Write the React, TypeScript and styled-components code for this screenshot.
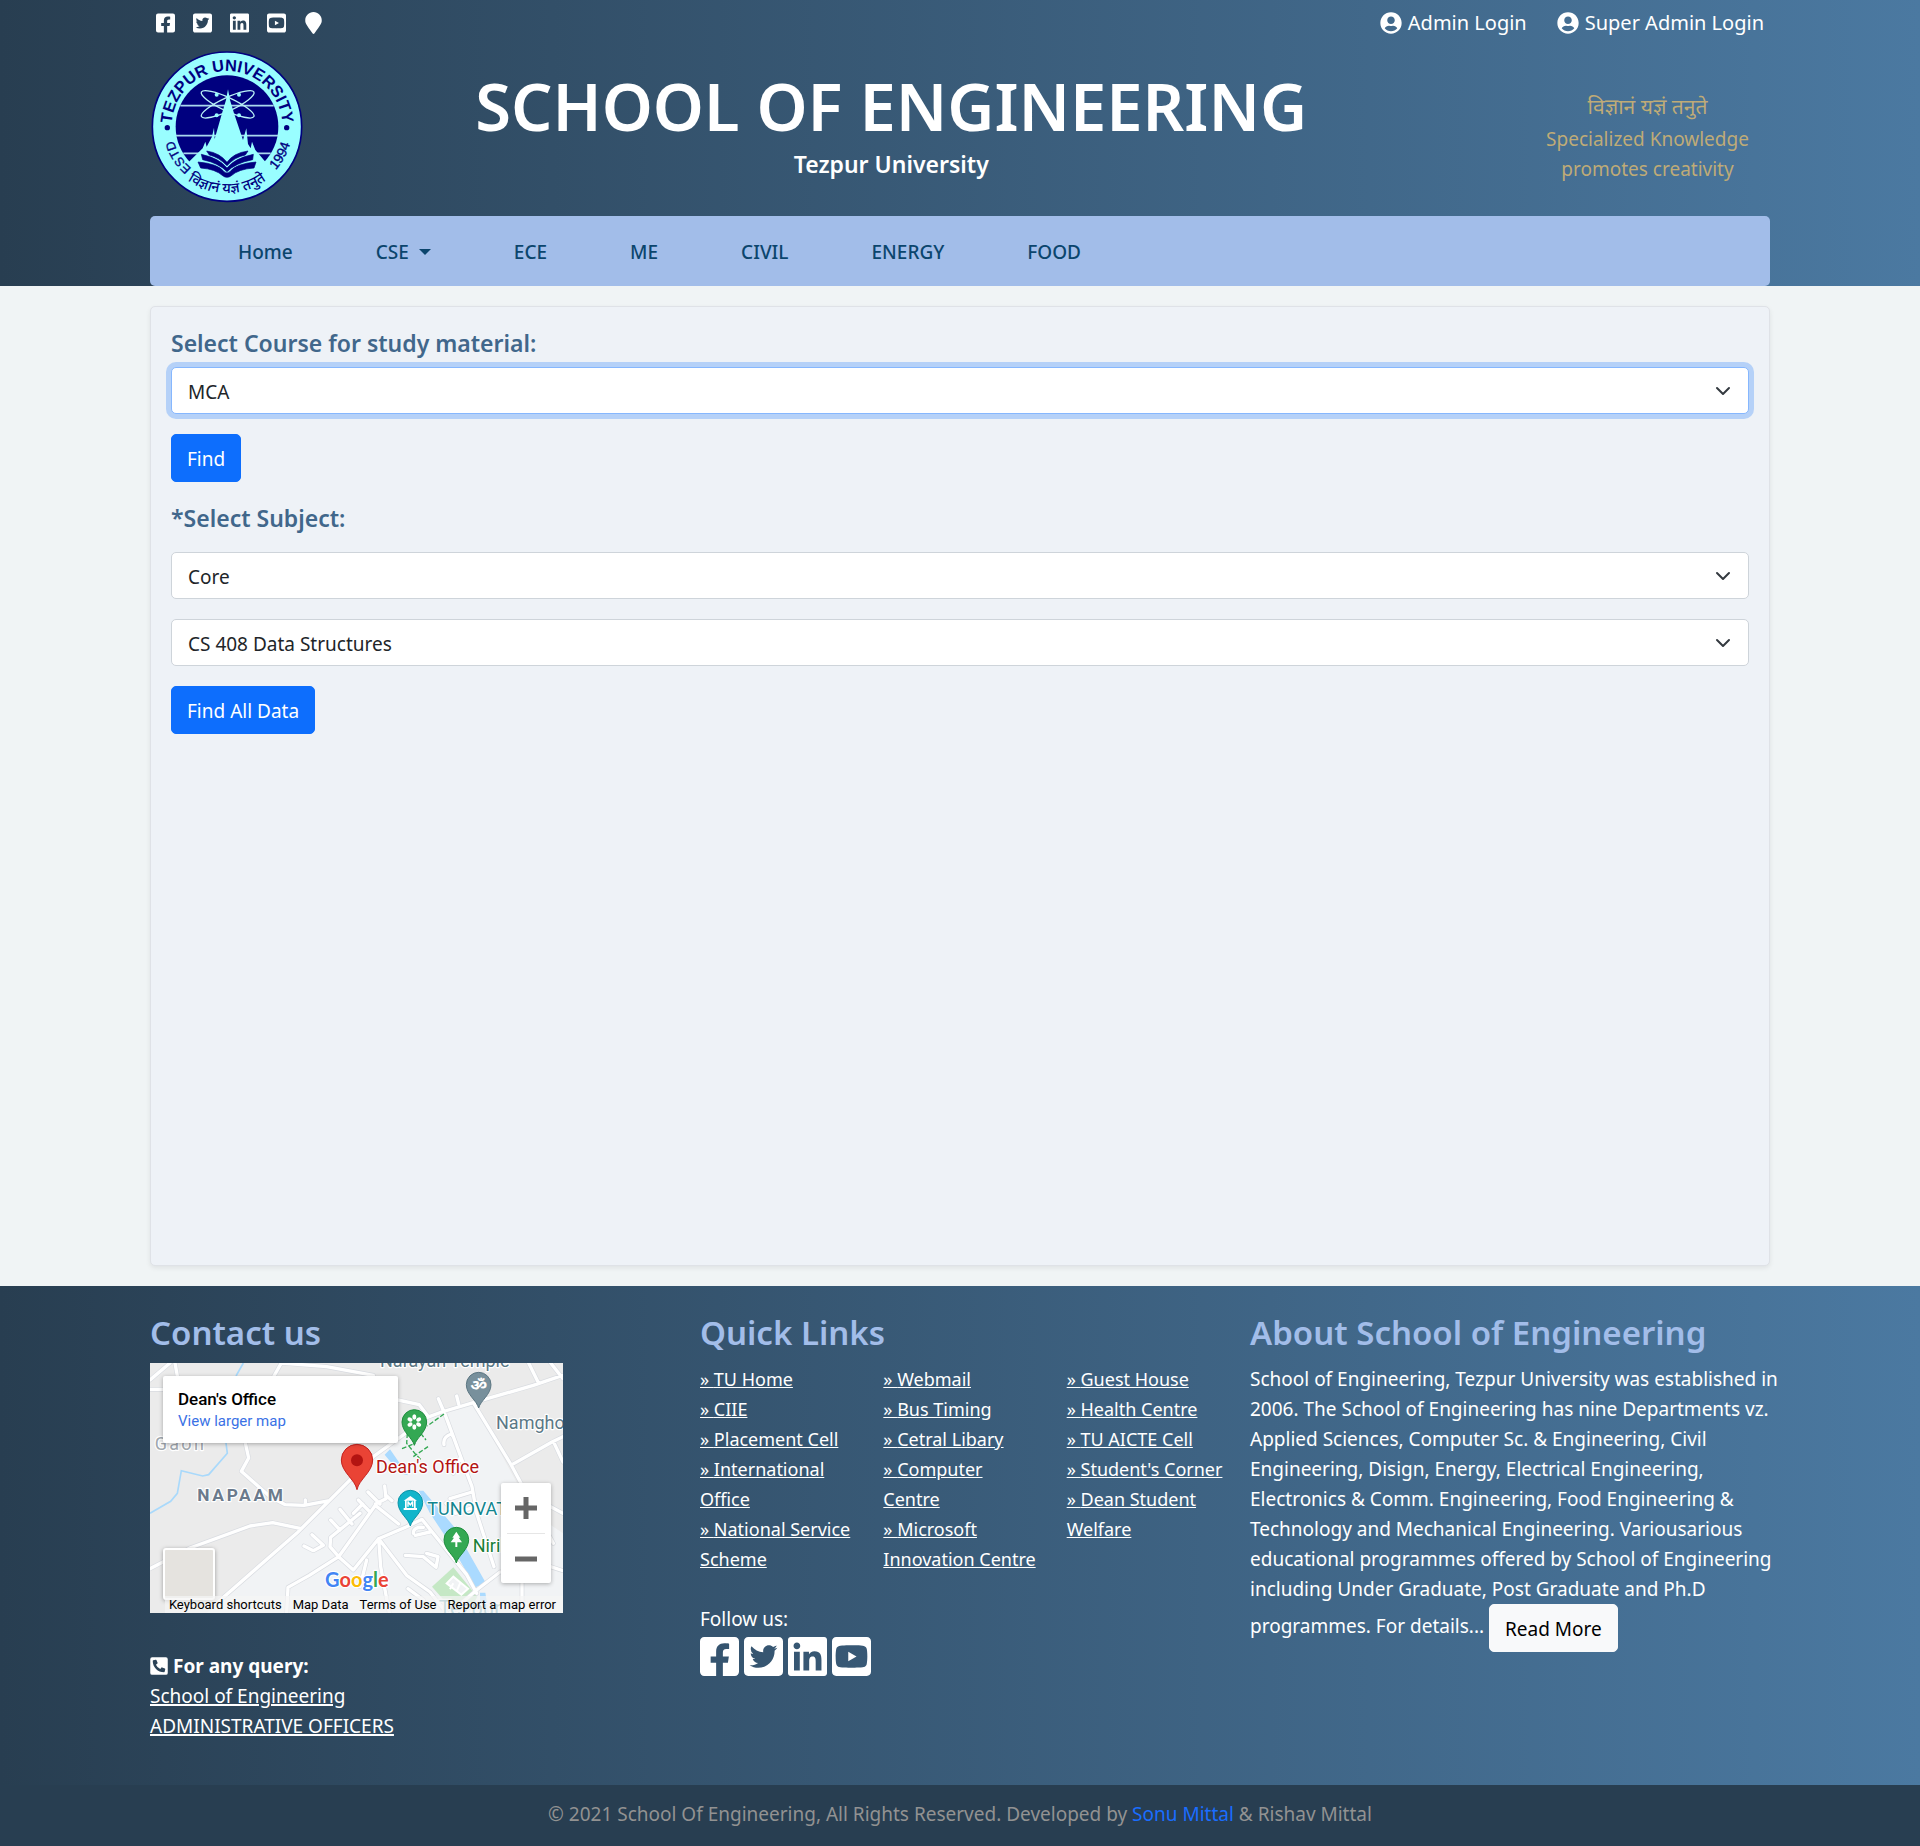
import React from "react";
import styled, { createGlobalStyle, css } from "styled-components";
import {
  FaFacebookSquare,
  FaTwitterSquare,
  FaLinkedin,
  FaYoutubeSquare,
  FaMapMarker,
  FaUserCircle,
  FaPhoneSquareAlt,
} from "react-icons/fa";

const color = {
  deep: "#283e51",
  light: "#4b79a1",
  sky: "#a2bde9",
  slate: "#41678b",
  gold: "#bfab77",
  primary: "#0d6efd",
};

const GlobalStyle = createGlobalStyle`
  *, *::before, *::after { box-sizing: border-box; }
  body {
    margin: 0;
    background: #f0f4f5;
    color: #212529;
    font-family: "Noto Sans", "Open Sans", sans-serif;
    font-size: 19px;
    line-height: 30px;
  }
  a { color: inherit; text-decoration: none; }
  h1, h2, h3, p, ul { margin: 0; padding: 0; }
  ul { list-style: none; }
`;

const Container = styled.div`
  width: 100%;
  max-width: 1650px;
  margin: 0 auto;
  padding: 0 15px;
`;

const gradient = css`
  background: linear-gradient(to right, ${color.deep}, ${color.light});
  color: #fff;
`;

/* ---------- header ---------- */

const Header = styled.header`
  ${gradient}
`;

const TopBar = styled.div`
  display: flex;
  justify-content: space-between;
  align-items: center;
  height: 45px;
  padding: 0 6px;
`;

const IconRow = styled.div<{ $large?: boolean }>`
  display: flex;
  align-items: center;
  gap: ${(p) => (p.$large ? 5 : 18)}px;

  a { display: block; }
  svg {
    display: block;
    width: ${(p) => (p.$large ? 39 : 19)}px;
    height: ${(p) => (p.$large ? 45 : 22)}px;
  }
`;

const LoginLinks = styled.nav`
  display: flex;
  gap: 30px;
  font-size: 20px;

  a { display: flex; align-items: center; gap: 6px; }
  svg { width: 22px; height: 22px; }
`;

const Brand = styled.div`
  display: grid;
  grid-template-columns: minmax(0, 1fr) minmax(0, 9fr) minmax(0, 2fr);
  align-items: center;
  min-height: 171px;
  margin: 0 -15px;
  padding-bottom: 9px;
`;

const LogoLink = styled.a`
  display: flex;
  padding-left: 15px;

  svg { flex: none; width: 154px; height: 154px; }
`;

const BrandText = styled.div`
  text-align: center;
  font-weight: 600;
`;

const Title = styled.h1`
  margin-bottom: 4px;
  font-size: 65px;
  line-height: 72px;
  font-weight: 600;
`;

const Subtitle = styled.p`
  font-size: 23px;
  line-height: 36px;
`;

const Motto = styled.p`
  padding-top: 20px;
  text-align: center;
  color: ${color.gold};

  span { display: block; }
`;

const MottoSanskrit = styled.span`
  font-size: 21px;
  line-height: 36px;
`;

const NavBar = styled.nav`
  padding: 21px 88px 19px;
  border-radius: 5px;
  background: ${color.sky};
  color: #0b456d;
  font-weight: 500;

  ul { display: flex; flex-wrap: wrap; gap: 0 83px; }
  a { display: flex; align-items: center; gap: 10px; }
`;

const Caret = styled.span`
  border-top: 6px solid currentColor;
  border-left: 6px solid transparent;
  border-right: 6px solid transparent;
`;

/* ---------- main ---------- */

const Main = styled.main`
  padding: 20px 0;
`;

const Card = styled.form`
  min-height: 960px;
  padding: 20px;
  border: 1px solid #dfe2e7;
  border-radius: 5px;
  background: #eef2f7;
  box-shadow: 0 2px 5px rgba(0, 0, 0, 0.075);
`;

const FieldLabel = styled.label<{ $space: number }>`
  display: block;
  padding-top: 1px;
  margin-bottom: ${(p) => p.$space}px;
  font-size: 23px;
  font-weight: 600;
  color: ${color.slate};
`;

const SelectWrap = styled.div`
  display: grid;
  align-items: center;
  margin-bottom: 20px;

  > * { grid-area: 1 / 1; }
  svg { justify-self: end; width: 16px; height: 16px; margin-right: 18px; pointer-events: none; }
`;

const activeField = css`
  border-color: #86b7fe;
  box-shadow: 0 0 0 5px rgba(13, 110, 253, 0.25);
  outline: 0;
`;

const Select = styled.select<{ $active?: boolean }>`
  appearance: none;
  width: 100%;
  height: 47px;
  padding: 2px 45px 0 16px;
  border: 1px solid #ced4da;
  border-radius: 5px;
  background: #fff;
  color: #212529;
  font: inherit;
  ${(p) => p.$active && activeField}

  &:focus { ${activeField} }
`;

const Button = styled.button<{ $light?: boolean }>`
  height: 48px;
  padding: 2px 15px 0;
  border: 1px solid ${(p) => (p.$light ? "#f8f9fa" : color.primary)};
  border-radius: 5px;
  background: ${(p) => (p.$light ? "#f8f9fa" : color.primary)};
  color: ${(p) => (p.$light ? "#000" : "#fff")};
  font: inherit;
  vertical-align: middle;
  cursor: pointer;
`;

const FormRow = styled.div`
  display: flex;
  margin-bottom: 20px;
`;

/* ---------- footer ---------- */

const FooterTop = styled.div`
  ${gradient}
  padding: 26px 0 44px;
`;

const FooterGrid = styled.div`
  display: grid;
  grid-template-columns: repeat(3, minmax(0, 1fr));
  gap: 30px;
`;

const FooterHeading = styled.h2`
  margin-bottom: 9px;
  font-size: 33px;
  line-height: 42px;
  font-weight: 600;
  color: ${color.sky};
`;

const Query = styled.div`
  display: flex;
  flex-direction: column;
  align-items: flex-start;
  margin-top: 38px;

  strong { display: flex; align-items: center; gap: 5px; }
  svg { width: 18px; height: 20px; }
  a { text-decoration: underline; text-decoration-thickness: 2px; }
`;

const LinkColumns = styled.div`
  display: grid;
  grid-template-columns: repeat(3, minmax(0, 1fr));
  margin: 0 -30px 30px 0;
  padding-top: 1px;
  font-size: 18px;

  ul { padding-right: 26px; }
  a { text-decoration: underline; }
`;

const About = styled.section`
  margin-right: -10px;

  p { padding-top: 1px; }
`;

const FooterBottom = styled.div`
  padding: 14px 0 17px;
  background: ${color.deep};
  color: #929292;
  text-align: center;

  a { color: #1a6dff; }
`;

/* ---------- map ---------- */

const MapFrame = styled.div`
  position: relative;
  max-width: 413px;
  height: 250px;
  overflow: hidden;
  background: #ebebeb;
  font-family: Roboto, "Noto Sans", sans-serif;

  > svg { display: block; width: 413px; height: 250px; }
`;

const MapInfo = styled.div`
  position: absolute;
  top: 13px;
  left: 13px;
  width: 235px;
  height: 67px;
  padding: 12px 15px;
  border-radius: 2px;
  background: #fff;
  box-shadow: 0 1px 4px rgba(0, 0, 0, 0.3);
  color: #000;
`;

const MapInfoTitle = styled.h3`
  font-size: 17px;
  line-height: 23px;
  font-weight: 500;
`;

const MapInfoLink = styled.a`
  display: block;
  font-size: 15px;
  line-height: 20px;
  color: #3a71e5;
`;

const MapThumb = styled.button`
  position: absolute;
  left: 13px;
  bottom: 13px;
  width: 52px;
  height: 52px;
  padding: 0;
  border: 2px solid #fff;
  border-radius: 3px;
  background: #e5e3df;
  box-shadow: 0 1px 4px rgba(0, 0, 0, 0.35);
`;

const ZoomPanel = styled.div`
  position: absolute;
  right: 12px;
  bottom: 30px;
  display: flex;
  flex-direction: column;
  width: 50px;
  padding: 0 6px;
  border-radius: 2px;
  background: #fff;
  box-shadow: 0 1px 4px rgba(0, 0, 0, 0.3);
`;

const ZoomButton = styled.button`
  display: grid;
  place-items: center;
  height: 50px;
  padding: 0;
  border: 0;
  background: none;

  & + & { border-top: 1px solid #e6e6e6; }
  svg { width: 22px; height: 22px; }
`;

const MapLegal = styled.div`
  position: absolute;
  right: 0;
  bottom: 0;
  left: 15px;
  display: flex;
  justify-content: flex-end;
  gap: 11px;
  padding-right: 7px;
  background: rgba(245, 245, 245, 0.7);
  color: #000;
  font-size: 13px;
  line-height: 17px;
  white-space: nowrap;
`;

/* ---------- drawings ---------- */

const Logo = () => (
  <svg viewBox="30 12 462 462" role="img" aria-label="Tezpur University">
    <defs>
      <path id="ringTop" d="M96 262 A166 166 0 1 1 426 262" />
      <path id="ringLeft" d="M180 388 A165 165 0 0 1 96 245" />
      <path id="ringRight" d="M368 409 A196 196 0 0 0 457 245" />
      <path id="ringBottom" d="M86 340 A199 199 0 0 0 436 340" />
    </defs>
    <circle cx="261" cy="245" r="224" fill="#99feff" stroke="#00007f" strokeWidth="5" />
    <circle cx="261" cy="245" r="154" fill="#00007f" />
    <g stroke="#a9d8ee" strokeWidth="5">
      <path d="M121 182H401M108 272H414M130 325H392" />
    </g>
    <g fill="none" stroke="#b9f2f7" strokeWidth="4">
      <ellipse cx="263" cy="178" rx="87" ry="20" transform="rotate(25 263 178)" />
      <ellipse cx="263" cy="178" rx="87" ry="20" transform="rotate(-25 263 178)" />
    </g>
    <g fill="#99feff">
      <circle cx="230" cy="149" r="6" />
      <circle cx="297" cy="149" r="6" />
      <circle cx="230" cy="211" r="6" />
      <circle cx="297" cy="211" r="6" />
      <path d="M264 133 L270 165 L282 205 L309 285 L319 250 L324 297 L332 310 L336 290 L346 315 L376 350 L374 372 Q330 405 261 405 Q190 405 147 372 L147 350 L188 310 L196 290 L200 305 L216 275 L222 248 L224 282 L246 205 L258 165 Z" />
    </g>
    <g fill="#00007f" stroke="#00007f" strokeLinejoin="round" strokeWidth="2">
      <path d="M200 318 Q240 324 261 352 Q280 324 324 318 L316 330 Q284 336 261 362 Q236 336 208 330Z" />
      <path d="M184 328 Q238 340 261 369 Q284 340 340 328 L338 344 Q286 354 261 380 Q236 354 188 344Z" />
      <path d="M174 351 Q234 356 252 380 Q261 388 270 380 Q288 356 348 351 L342 369 Q296 372 274 392 Q261 402 248 392 Q226 372 182 369Z" />
    </g>
    <g fill="#00007f" fontFamily='"Liberation Sans", sans-serif' textAnchor="middle">
      <text fontSize="49" fontWeight="700">
        <textPath href="#ringTop" startOffset="50%">TEZPUR UNIVERSITY</textPath>
      </text>
      <text fontSize="38" stroke="#00007f" strokeWidth="1">
        <textPath href="#ringLeft" startOffset="47%">ESTD</textPath>
      </text>
      <text fontSize="41" stroke="#00007f" strokeWidth="1">
        <textPath href="#ringRight" startOffset="50%">1994</textPath>
      </text>
      <text fontSize="43" fontWeight="500" fontFamily='"Noto Sans", sans-serif'>
        <textPath href="#ringBottom" startOffset="50%">विज्ञानं यज्ञं तनुते</textPath>
      </text>
    </g>
    <circle cx="82" cy="248" r="8" fill="#00007f" />
    <circle cx="440" cy="248" r="8" fill="#00007f" />
  </svg>
);

const Chevron = () => (
  <svg viewBox="0 0 16 16" fill="none" stroke="#343a40" strokeWidth="2" strokeLinecap="round" strokeLinejoin="round" aria-hidden="true">
    <path d="M2 5l6 6 6-6" />
  </svg>
);

type PinProps = { x: number; y: number; fill: string; edge: string; children?: React.ReactNode };
const Pin = ({ x, y, fill, edge, children }: PinProps) => (
  <g transform={`translate(${x} ${y})`}>
    <path d="M0 70 C-5 48 -37 30 -37 0 A37 37 0 0 1 37 0 C37 30 5 48 0 70Z" fill={fill} stroke={edge} strokeWidth="3" />
    {children}
  </g>
);

const roads = [
  "M30 240 L90 189 M105 189 L112 228 M30 268 H72",
  "M424 189 L402 228 M424 189 L560 200 L700 226 M774 300 L838 314 L862 346",
  "M1269 226 L1180 256 L1000 308 L905 336 L862 352 L700 470 L470 700 L235 905",
  "M1166 189 L1196 250 M1232 189 L1269 236 M895 296 L912 336 M950 288 L956 312",
  "M1000 308 L1112 492 L1240 730 M1269 410 L1236 426 L1116 494 M1240 424 L1269 486",
  "M316 429 L326 474 L304 514 L392 592 L436 614 L492 616 L568 602 M496 600 V612",
  "M30 806 L150 744 L330 678 L398 668 L484 686 M150 744 V758",
  "M440 939 L444 862 L508 826 L596 770 L706 616 L776 672 M596 770 L570 740 L572 712 L660 640",
  "M492 738 L520 752 L550 736 L516 704 M572 660 L600 690 M600 628 L636 672 M640 640 L668 612 M655 600 L690 636 M684 576 L720 612 M734 558 L738 596 L706 612 M738 586 L756 602",
  "M596 770 L640 810 L716 716 L800 680 L846 658 L980 824 L1010 880 M716 716 L722 800 L748 939 M716 716 L800 826 L870 876 L920 939 M680 780 L660 860",
  "M1080 816 L1010 870 L930 939 M804 866 L850 900 M796 766 L850 770 L888 802 L894 770 L860 760 M820 700 Q820 680 850 682 M826 706 L870 696",
  "M914 340 L940 410 L962 470 L996 560 L1010 640 L1062 800 M912 434 Q908 410 934 402 L940 410 M940 520 L962 470 M930 596 L996 576 M918 610 L946 640 L1006 620",
  "M1146 850 V939 M1232 620 L1269 640 M1232 800 L1269 812",
];

const labelProps = { stroke: "#fff", strokeWidth: 7, strokeLinejoin: "round" as const, paintOrder: "stroke" };

const MapDrawing = () => (
  <svg viewBox="30 189 1239 750" role="img" aria-label="Map around the Dean's Office">
    <path d="M862 350 L1000 308 L1180 640 L1269 700 V939 H200 L470 700 L700 470Z" fill="#f1f3f5" />
    <path d="M310 189 L288 228 M258 429 L262 460 L206 524 L188 528 L124 512 L112 580 L92 604 L30 640" fill="none" stroke="#a9d9fb" strokeWidth="5" />
    <path d="M734 464 L750 448 L804 526 L780 520Z M836 572 L850 572 L942 680 L1038 850 L1006 862 L930 730 L870 640Z M1020 878 L1036 878 L1046 939 H1020Z" fill="#aadaff" />
    <path d="M876 860 L940 802 L1012 890 L990 930 L920 910Z" fill="#c5e8c5" />
    {["#d9dce1", "#fff"].map((tone, i) => (
      <path key={tone} d={roads.join(" ")} fill="none" stroke={tone} strokeWidth={i ? 10 : 14} strokeLinejoin="round" strokeLinecap="round" />
    ))}
    <path d="M920 850 L940 830 L984 866 L964 884Z M940 850 L930 868 M960 850 L950 874" fill="#f1f3f5" stroke="#fff" strokeWidth="6" />
    <path d="M912 342 L862 378 M802 400 L800 430 L826 462 L844 480 M786 446 L826 430 M820 470 L864 440 M842 400 L858 420" fill="none" stroke="#34a853" strokeWidth="4" strokeDasharray="14 6" />
    <g fontFamily='Roboto, "Noto Sans", sans-serif' fontSize="54" {...labelProps}>
      <text x="720" y="201" fill="#5b7886">Narayan Temple</text>
      <text x="1068" y="386" fill="#5b7886">Namghor</text>
      <text x="44" y="451" fill="#a0a7ae" letterSpacing="7">Gaon</text>
      <text x="172" y="602" fill="#6b7a8c" fontSize="52" fontWeight="700" letterSpacing="8">NAPAAM</text>
      <text x="708" y="519" fill="#b31412">Dean's Office</text>
      <text x="862" y="645" fill="#12858f">TUNOVATE</text>
      <text x="998" y="755" fill="#188038">Nirib</text>
      <text x="896" y="946" fill="#5f9ea8" fontSize="62">Tezpur</text>
    </g>
    <Pin x={1016} y={254} fill="#78909c" edge="#5c7682">
      <text y="18" textAnchor="middle" fill="#fff" fontSize="50" fontFamily='"Noto Sans", sans-serif' fontWeight="700">ॐ</text>
    </Pin>
    <Pin x={823} y={366} fill="#34a853" edge="#1e8e3e">
      <g fill="#fff">
        {[0, 60, 120, 180, 240, 300].map((a) => (
          <ellipse key={a} cx="0" cy="-15" rx="6" ry="8" transform={`rotate(${a})`} />
        ))}
      </g>
    </Pin>
    <Pin x={811} y={608} fill="#12b5cb" edge="#0c93a6">
      <path d="M-20 -6 L0 -20 L20 -6Z M-20 16 H20 V22 H-20Z M-16 -6 H-11 V18 H-16Z M11 -6 H16 V18 H11Z M-9 12 V-4 H-5 L0 3 L5 -4 H9 V12 H5 V4 L0 10 L-5 4 V12Z" fill="#fff" />
    </Pin>
    <Pin x={949} y={719} fill="#34a853" edge="#1e8e3e">
      <path d="M0 -24 L12 -6 H7 L17 8 H3 V22 H-3 V8 H-17 L-7 -6 H-12Z" fill="#fff" />
    </Pin>
    <path d="M651 569 C645 538 604 516 604 480 A47 47 0 0 1 698 480 C698 516 657 538 651 569Z" fill="#ea4335" stroke="#c5221f" strokeWidth="3" />
    <circle cx="651" cy="481" r="18" fill="#b31412" />
    <text x="555" y="862" fontFamily="Lato, sans-serif" fontSize="60" fontWeight="700" {...labelProps}>
      <tspan fill="#4285f4">G</tspan>
      <tspan fill="#ea4335">o</tspan>
      <tspan fill="#fbbc05">o</tspan>
      <tspan fill="#4285f4">g</tspan>
      <tspan fill="#34a853">l</tspan>
      <tspan fill="#ea4335">e</tspan>
    </text>
  </svg>
);

/* ---------- data ---------- */

const navItems = ["Home", "CSE", "ECE", "ME", "CIVIL", "ENERGY", "FOOD"];

const quickLinks = [
  ["TU Home", "CIIE", "Placement Cell", "International Office", "National Service Scheme"],
  ["Webmail", "Bus Timing", "Cetral Libary", "Computer Centre", "Microsoft Innovation Centre"],
  ["Guest House", "Health Centre", "TU AICTE Cell", "Student's Corner", "Dean Student Welfare"],
];

const socials = [
  { name: "Facebook", Icon: FaFacebookSquare },
  { name: "Twitter", Icon: FaTwitterSquare },
  { name: "LinkedIn", Icon: FaLinkedin },
  { name: "YouTube", Icon: FaYoutubeSquare },
];

type Item = (typeof socials)[number];
const SocialLinks = ({ items, large }: { items: Item[]; large?: boolean }) => (
  <IconRow $large={large}>
    {items.map(({ name, Icon }) => (
      <a key={name} href="#" aria-label={name}>
        <Icon />
      </a>
    ))}
  </IconRow>
);

export default function App() {
  return (
    <>
      <GlobalStyle />
      <Header>
        <Container>
          <TopBar>
            <SocialLinks items={[...socials, { name: "Location", Icon: FaMapMarker }]} />
            <LoginLinks aria-label="Login">
              <a href="#"><FaUserCircle />Admin Login</a>
              <a href="#"><FaUserCircle />Super Admin Login</a>
            </LoginLinks>
          </TopBar>
          <Brand>
            <LogoLink href="#"><Logo /></LogoLink>
            <BrandText>
              <Title>SCHOOL OF ENGINEERING</Title>
              <Subtitle>Tezpur University</Subtitle>
            </BrandText>
            <Motto>
              <MottoSanskrit lang="sa">विज्ञानं यज्ञं तनुते</MottoSanskrit>
              <span>Specialized Knowledge</span>
              <span>promotes creativity</span>
            </Motto>
          </Brand>
          <NavBar aria-label="Departments">
            <ul>
              {navItems.map((item) => (
                <li key={item}>
                  <a href="#">{item}{item === "CSE" && <Caret />}</a>
                </li>
              ))}
            </ul>
          </NavBar>
        </Container>
      </Header>

      <Main>
        <Container>
          <Card>
            <FieldLabel htmlFor="course" $space={9}>Select Course for study material:</FieldLabel>
            <SelectWrap>
              <Select id="course" $active defaultValue="MCA"><option>MCA</option></Select>
              <Chevron />
            </SelectWrap>
            <FormRow><Button type="button">Find</Button></FormRow>
            <FieldLabel htmlFor="category" $space={19}>*Select Subject:</FieldLabel>
            <SelectWrap>
              <Select id="category" defaultValue="Core"><option>Core</option></Select>
              <Chevron />
            </SelectWrap>
            <SelectWrap>
              <Select aria-label="Subject" defaultValue="CS 408 Data Structures"><option>CS 408 Data Structures</option></Select>
              <Chevron />
            </SelectWrap>
            <FormRow><Button type="button">Find All Data</Button></FormRow>
          </Card>
        </Container>
      </Main>

      <footer>
        <FooterTop>
          <Container>
            <FooterGrid>
              <section>
                <FooterHeading>Contact us</FooterHeading>
                <MapFrame>
                  <MapDrawing />
                  <MapInfo>
                    <MapInfoTitle>Dean's Office</MapInfoTitle>
                    <MapInfoLink href="#">View larger map</MapInfoLink>
                  </MapInfo>
                  <MapThumb type="button" aria-label="Show satellite imagery" />
                  <ZoomPanel>
                    <ZoomButton type="button" aria-label="Zoom in">
                      <svg viewBox="0 0 22 22"><path d="M11 0V22M0 11H22" stroke="#666" strokeWidth="5" /></svg>
                    </ZoomButton>
                    <ZoomButton type="button" aria-label="Zoom out">
                      <svg viewBox="0 0 22 22"><path d="M0 11H22" stroke="#666" strokeWidth="5" /></svg>
                    </ZoomButton>
                  </ZoomPanel>
                  <MapLegal>
                    <span>Keyboard shortcuts</span>
                    <span>Map Data</span>
                    <a href="#">Terms of Use</a>
                    <a href="#">Report a map error</a>
                  </MapLegal>
                </MapFrame>
                <Query>
                  <strong><FaPhoneSquareAlt />For any query:</strong>
                  <a href="#">School of Engineering</a>
                  <a href="#">ADMINISTRATIVE OFFICERS</a>
                </Query>
              </section>

              <section>
                <FooterHeading>Quick Links</FooterHeading>
                <LinkColumns>
                  {quickLinks.map((column) => (
                    <ul key={column[0]}>
                      {column.map((label) => (
                        <li key={label}><a href="#">» {label}</a></li>
                      ))}
                    </ul>
                  ))}
                </LinkColumns>
                <p>Follow us:</p>
                <SocialLinks items={socials} large />
              </section>

              <About>
                <FooterHeading>About School of Engineering</FooterHeading>
                <p>
                  School of Engineering, Tezpur University was established in 2006. The School of Engineering has nine
                  Departments vz. Applied Sciences, Computer Sc. &amp; Engineering, Civil Engineering, Disign, Energy,
                  Electrical Engineering, Electronics &amp; Comm. Engineering, Food Engineering &amp; Technology and
                  Mechanical Engineering. Variousarious educational programmes offered by School of Engineering
                  including Under Graduate, Post Graduate and Ph.D programmes. For details...{" "}
                  <Button type="button" $light>Read More</Button>
                </p>
              </About>
            </FooterGrid>
          </Container>
        </FooterTop>
        <FooterBottom>
          © 2021 School Of Engineering, All Rights Reserved. Developed by <a href="#">Sonu Mittal</a> &amp; Rishav Mittal
        </FooterBottom>
      </footer>
    </>
  );
}
